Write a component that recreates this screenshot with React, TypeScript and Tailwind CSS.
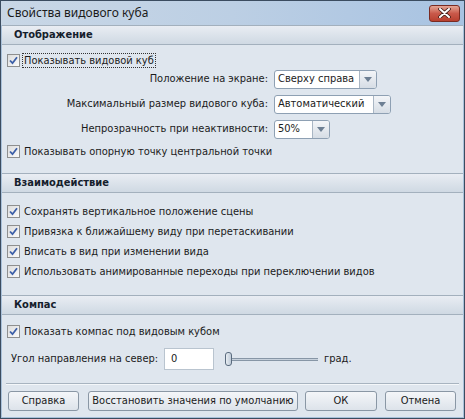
import React from "react";

const F: React.CSSProperties = {
  fontFamily: "'DejaVu Sans Condensed', 'DejaVu Sans', Verdana, sans-serif",
  fontStretch: "condensed",
};

function Check({ focus, label }: { focus?: boolean; label: string }) {
  return (
    <div className="flex items-center h-[20px] pl-[5px] whitespace-nowrap">
      <div className="w-[13px] h-[13px] border border-[#8e8f8f] bg-gradient-to-br from-[#dcdcdc] to-[#fbfbfb] flex items-center justify-center">
        <svg width="9" height="9" viewBox="0 0 9 9">
          <path d="M1 4.5 L3.5 7.2 L8 1.2" stroke="#3c5fa8" strokeWidth="1.8" fill="none" />
        </svg>
      </div>
      <span
        className={
          "ml-[2px] px-[1px] leading-[13px] text-[#1b1b1b] " +
          (focus ? "border border-dotted border-[#333]" : "border border-transparent")
        }
      >
        {label}
      </span>
    </div>
  );
}

function Arrow() {
  return (
    <div className="w-[17px] h-full border-l border-[#a9b6c4] bg-gradient-to-b from-[#f3f5f8] to-[#d6dde5] flex items-center justify-center rounded-r-[2px]">
      <svg width="8" height="5" viewBox="0 0 8 5">
        <path d="M0 0 L8 0 L4 5 Z" fill="#6d7f93" />
      </svg>
    </div>
  );
}

function Select({ value, w }: { value: string; w: string }) {
  return (
    <div className={"h-[19px] flex border border-[#8ea0b3] rounded-[3px] bg-white " + w}>
      <div className="flex-1 pl-[3px] flex items-center text-[#1b1b1b] whitespace-nowrap overflow-hidden">{value}</div>
      <Arrow />
    </div>
  );
}

function Header({ title }: { title: string }) {
  return (
    <div className="h-[20px] border-y border-[#a3b0bd] bg-gradient-to-b from-[#e9edf3] to-[#cfd9e3] flex items-center pl-[12px] font-bold text-[#15202c]">
      {title}
    </div>
  );
}

function Btn({ label, w }: { label: string; w: string }) {
  return (
    <div
      className={
        "h-[20px] border border-[#8a97a5] rounded-[3px] bg-gradient-to-b from-[#f4f6f9] to-[#dde3ea] flex items-center justify-center text-[#1b1b1b] whitespace-nowrap " +
        w
      }
    >
      {label}
    </div>
  );
}

export default function App() {
  return (
    <div className="w-[465px] h-[419px] border border-[#3b4c60] bg-[#a9c1da] flex flex-col text-[11px]" style={F}>
      <div className="h-[24px] bg-gradient-to-r from-[#c9d7e6] via-[#bccfe4] to-[#a8c3e2] flex items-center justify-between pl-[6px] pr-[4px]">
        <span className="text-[12px] text-[#1b1b1b]" style={{ fontFamily: "'Noto Sans', sans-serif", fontStretch: "normal" }}>
          Свойства видового куба
        </span>
        <div className="w-[31px] h-[17px] rounded-[3px] border border-[#7a2b22] bg-gradient-to-b from-[#e3a595] via-[#c9594a] to-[#b8402f] flex items-center justify-center">
          <svg width="13" height="10" viewBox="0 0 13 10">
            <path d="M2 1 L11 9 M11 1 L2 9" stroke="#3c1a14" strokeWidth="3.6" strokeLinecap="round" />
            <path d="M2 1 L11 9 M11 1 L2 9" stroke="#ffffff" strokeWidth="2" strokeLinecap="round" />
          </svg>
        </div>
      </div>
      <div className="flex-1 mx-[1px] mb-[1px] bg-[#dfe6ee] flex flex-col">
        <Header title="Отображение" />
        <div className="mt-[5px]">
          <Check focus label="Показывать видовой куб" />
        </div>
        <div className="flex flex-col gap-[6px]">
          {[
            ["Положение на экране:", "Сверху справа", "w-[103px]"],
            ["Максимальный размер видового куба:", "Автоматический", "w-[117px]"],
            ["Непрозрачность при неактивности:", "50%", "w-[56px]"],
          ].map(([l, v, w]) => (
            <div key={l} className="flex items-center">
              <div className="w-[266px] text-right text-[#1b1b1b] whitespace-nowrap">{l}</div>
              <div className="ml-[6px]">
                <Select value={v} w={w} />
              </div>
            </div>
          ))}
        </div>
        <div className="mt-[2px]">
          <Check label="Показывать опорную точку центральной точки" />
        </div>
        <div className="mt-[12px]">
          <Header title="Взаимодействие" />
        </div>
        <div className="mt-[8px]">
          <Check label="Сохранять вертикальное положение сцены" />
          <Check label="Привязка к ближайшему виду при перетаскивании" />
          <Check label="Вписать в вид при изменении вида" />
          <Check label="Использовать анимированные переходы при переключении видов" />
        </div>
        <div className="mt-[14px]">
          <Header title="Компас" />
        </div>
        <div className="mt-[6px]">
          <Check label="Показать компас под видовым кубом" />
        </div>
        <div className="mt-[7px] flex items-center h-[22px]">
          <span className="ml-[9px] w-[153px] text-[#1b1b1b] whitespace-nowrap">Угол направления на север:</span>
          <div className="w-[50px] h-[22px] border border-[#b9c4cf] bg-white flex items-center pl-[6px] text-[#1b1b1b]">0</div>
          <div className="ml-[11px] w-[93px] h-[16px] flex items-center">
            <div className="w-[7px] h-[14px] rounded-[3px] border border-[#5a6b7e] bg-gradient-to-r from-[#e8edf2] to-[#bfcbd8]" />
            <div className="flex-1 h-[3px] border-y border-[#8796a6] bg-[#c7d1dc]" />
          </div>
          <span className="ml-[6px] text-[#1b1b1b]">град.</span>
        </div>
        <div className="mt-[13px] mx-[4px] border-t border-[#a8b4c0] border-b border-b-[#f4f7fa]" />
        <div className="mt-[6px] flex items-center pl-[6px]">
          <Btn label="Справка" w="w-[71px]" />
          <div className="ml-[9px]">
            <Btn label="Восстановить значения по умолчанию" w="w-[210px]" />
          </div>
          <div className="ml-[7px]">
            <Btn label="ОК" w="w-[72px]" />
          </div>
          <div className="ml-[8px]">
            <Btn label="Отмена" w="w-[71px]" />
          </div>
        </div>
      </div>
    </div>
  );
}
